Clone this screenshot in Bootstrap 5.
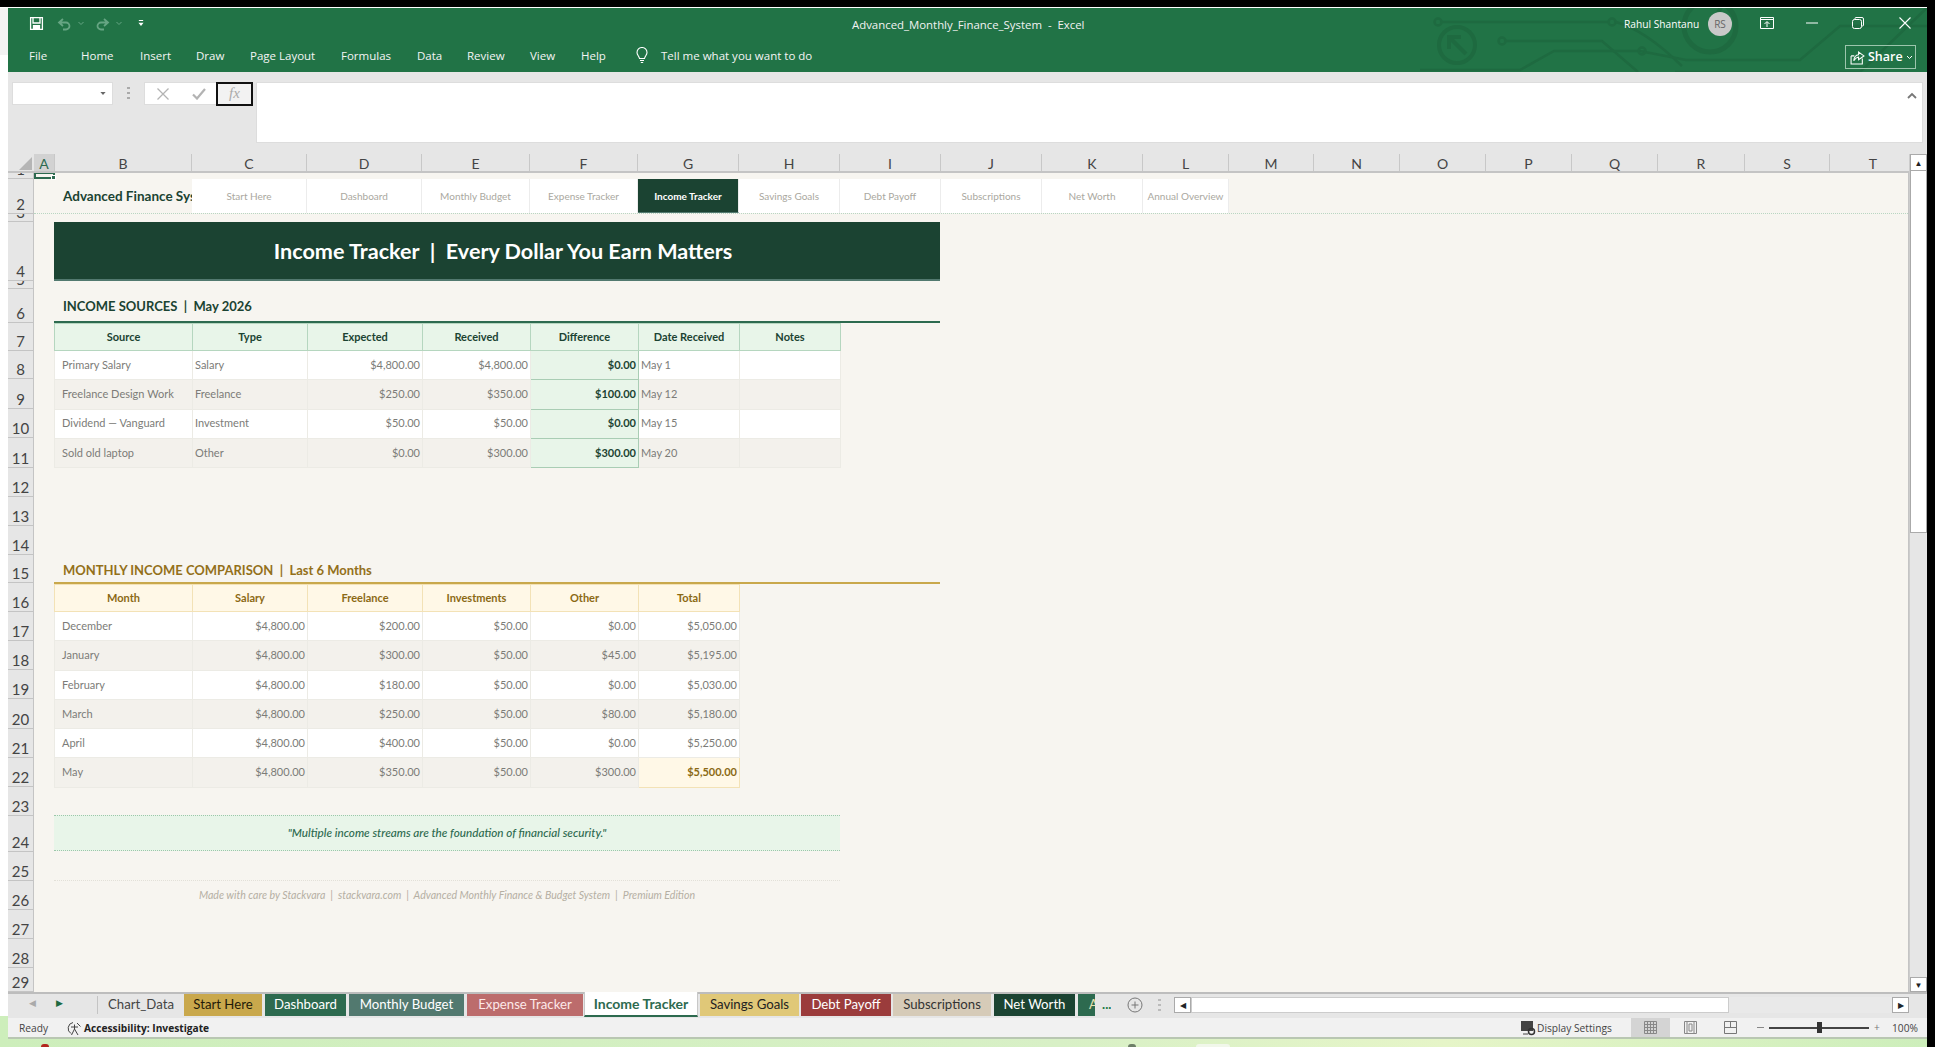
<!DOCTYPE html>
<html lang="en">
<head>
    <meta charset="UTF-8">
    <meta name="viewport" content="width=device-width, initial-scale=1.0">
    <title>Advanced_Monthly_Finance_System - Excel</title>
    <link href="https://cdn.jsdelivr.net/npm/bootstrap@5.3.0/dist/css/bootstrap.min.css" rel="stylesheet">
    <style>
        :root {
            --xl-green: #217346;
            --forest: #1b4332;
            --moss: #2d6a4f;
            --mint: #e8f5e9;
            --gold: #c9a84c;
            --gold-pale: #fff8e7;
            --paper: #f7f5f0;
            --chrome: #e6e6e6;
        }
        html, body { height: 100%; overflow: hidden; }
        body {
            background: #fff;
            font-family: "Open Sans", "Liberation Sans", sans-serif;
            font-size: 12px;
            position: relative;
        }
        .top-strip { height: 8px; background: #000; border-bottom: 1px solid #fff; }
        .right-strip { position: absolute; top: 0; right: 0; bottom: 0; width: 8px; background: #000; }
        .left-strip { position: absolute; top: 8px; left: 0; width: 8px; height: 47px; background: #f3f3f3; }
        .wallpaper { position: absolute; left: 0; right: 8px; top: 1016px; bottom: 0; background: linear-gradient(90deg, #cdeebb, #d8f0c6 55%, #e6f5c8 75%, #cdeebb); }
        .wall-spot { position: absolute; top: 1044px; height: 3px; border-radius: 3px 3px 0 0; }
        .xl-window { position: relative; z-index: 1; margin-left: 8px; width: 1919px; height: 1031px; }

        /* ribbon */
        .ribbon { height: 64px; background: var(--xl-green); color: #fff; position: relative; overflow: hidden; }
        .circuit { position: absolute; left: 1412px; top: 0; }
        .title-row { height: 32px; position: relative; }
        .qat { position: absolute; left: 21px; top: 8px; }
        .qat-undo { margin-left: 13px; }
        .qat-chev { margin-left: 6px; }
        .qat-redo { margin-left: 11px; }
        .qat-more { margin-left: 16px; }
        .doc-title { position: absolute; left: 844px; top: 8px; font-size: 11.4px; color: #f2f2f2; white-space: pre; }
        .user-name { position: absolute; left: 1616px; top: 9px; font-size: 10.2px; white-space: nowrap; }
        .avatar { position: absolute; left: 1700px; top: 4px; width: 24px; height: 24px; border-radius: 50%; background: #c9c9c9; color: #666; font-size: 10px; text-align: center; line-height: 24px; }
        .ctl-ico { position: absolute; top: 9px; }
        .menu-row { height: 32px; position: relative; }
        .menu-item { position: absolute; top: 7px; font-size: 11.5px; color: #f4f4f4; white-space: nowrap; }
        .share-btn { position: absolute; left: 1837px; top: 5px; width: 71px; height: 24px; border: 1px solid #9cc5ac; font-size: 12.5px; font-weight: 600; padding-left: 4px; gap: 3px; }

        /* formula bar */
        .formula-bar { height: 82px; background: var(--chrome); padding: 10px 4px 0 4px; }
        .name-box { width: 101px; height: 23px; background: #fff; border: 1px solid #ddd; padding-right: 6px; }
        .grip-dots { width: 31px; color: #aaa; }
        .fx-group { width: 109px; height: 23px; background: #fff; border: 1px solid #ddd; margin-right: 3px; }
        .fx-x { margin-left: 12px; margin-right: 23px; }
        .fx-btn { width: 37px; height: 24px; border: 2px solid #111; background: #f2f2f2; color: #aaa; font-family: "Liberation Serif", serif; font-style: italic; font-size: 15px; text-align: center; line-height: 19px; margin-left: auto; margin-right: -1px; }
        .formula-input { flex: 1; height: 61px; background: #fff; border: 1px solid #ddd; position: relative; }
        .formula-input svg { position: absolute; right: 5px; top: 9px; }

        /* grid shell */
        .grid-area { height: 838px; }
        .grid-left { width: 1901px; flex: none; overflow: hidden; background: #c4c4c4; }
        .col-strip { height: 19px; background: var(--chrome); font-family: "Lato", sans-serif; font-size: 14px; color: #444; border-bottom: 2px solid #c4c4c4; width: 1950px; }
        .col-corner { width: 26px; position: relative; flex: none; }
        .col-corner svg { position: absolute; right: 2px; bottom: 1px; }
        .col-label { text-align: center; border-right: 1px solid #c8c8c8; line-height: 19px; flex: none; }
        .col-label.on { background: #d2d2d2; color: var(--moss); }
        .sheet-wrap { height: 819px; }
        .row-strip { width: 26px; flex: none; background: var(--chrome); font-family: "Lato", sans-serif; font-size: 15px; color: #444; border-right: 1px solid #c4c4c4; }
        .row-label { border-bottom: 1px solid #c4c4c4; text-align: center; overflow: hidden; display: flex; align-items: flex-end; justify-content: center; line-height: 17px; }
        .sheet { width: 1874px; flex: none; background: var(--paper); font-family: "Lato", sans-serif; position: relative; overflow: hidden; }
        .cell-cursor { position: absolute; left: 0; top: 0; width: 21px; height: 6px; border: 2px solid var(--moss); border-top-width: 1px; }
        .cell-cursor::after { content: ""; position: absolute; right: -3px; bottom: -3px; width: 5px; height: 5px; background: var(--moss); border: 1px solid #fff; }

        .nav-row { margin-top: 6px; height: 35px; border-bottom: 1px dotted #b9d6c2; width: 1874px; }
        .nav-brand { width: 158px; flex: none; padding-left: 29px; font-weight: 700; font-size: 13.5px; color: var(--forest); line-height: 35px; white-space: nowrap; overflow: hidden; }
        .nav-cell { flex: none; background: #fff; border-right: 1px solid #ececec; color: #aaa8a0; font-size: 10px; text-align: center; line-height: 35px; white-space: nowrap; }
        .nav-cell.on { background: var(--forest); color: #fff; font-weight: 700; border-bottom: 1px solid #52796f; }
        .banner { margin: 8px 0 0 20px; width: 886px; height: 59px; padding-left: 12px; background: var(--forest); color: #fff; font-weight: 700; font-size: 21.6px; text-align: center; line-height: 58px; border-bottom: 2px solid #52796f; white-space: pre; }
        .sect-title { margin: 8px 0 0 20px; width: 886px; height: 34px; padding-left: 9px; font-weight: 700; font-size: 13px; line-height: 35px; white-space: pre; color: var(--forest); border-bottom: 2px solid var(--moss); }
        .sect-title.goldish { margin-top: 87px; height: 29px; line-height: 31px; color: #93701a; border-bottom-color: var(--gold); }

        .sheet-table { table-layout: fixed; margin: 0 0 0 20px; --bs-table-bg: transparent; font-size: 11px; color: #7c7c78; width: auto; }
        .sheet-table th, .sheet-table td { padding: 0 2px; vertical-align: middle; border: 1px solid #ecebe5; white-space: nowrap; }
        .sheet-table th { height: 27px; text-align: center; font-weight: 700; color: var(--forest); background: var(--mint); border-color: #b5d6bf; }
        .sheet-table td { height: 29.3px; background: #fff; }
        .sheet-table tr:nth-child(even) td { background: #f3f1ec; }
        .sheet-table td:first-child { padding-left: 7px; }
        .sheet-table td.gain { background: var(--mint) !important; color: var(--forest); font-weight: 700; border-color: #a9cdb4; }
        .sheet-table.goldish th { background: var(--gold-pale); color: #8b6914; border-color: #f3e2b6; }
        .sheet-table.goldish td { height: 29.25px; }
        .sheet-table.goldish td.top-total { background: var(--gold-pale) !important; color: #8b6914; font-weight: 700; border-color: #f3e2b6; }

        .quote-band { margin: 27px 0 0 20px; width: 786px; height: 36px; background: var(--mint); border-top: 1px dotted #9cc7aa; border-bottom: 1px dotted #9cc7aa; color: var(--moss); font-style: italic; font-size: 11.7px; font-weight: 500; text-align: center; line-height: 32px; }
        .made-with { margin: 29px 0 0 20px; width: 786px; height: 29px; border-top: 1px dotted #e2e0d8; color: #b5afa3; font-style: italic; font-size: 10.6px; text-align: center; line-height: 28px; white-space: pre; }

        .vscroll { width: 18px; flex: none; background: var(--chrome); position: relative; border-left: 1px solid #ccc; }
        .scroll-thumb { height: 362px; background: #fff; border: 1px solid #aaa; border-top: 0; }
        .scroll-btn { width: 17px; height: 17px; background: #fff; border: 1px solid #aaa; font-size: 8px; text-align: center; line-height: 15px; color: #222; }
        .vscroll-end { position: absolute; bottom: 0; left: 0; height: 15px; line-height: 13px; }

        /* sheet tabs */
        .tab-bar { height: 26px; background: var(--chrome); border-top: 2px solid #bdbdbd; position: relative; font-family: "Lato", sans-serif; font-size: 13.2px; }
        .tab-bar .sheet-tab { position: absolute; top: 0; height: 22px; line-height: 21px; text-align: center; white-space: nowrap; overflow: hidden; }
        .tab-bar .tab-active { top: -2px; height: 25px; background: #fff; color: var(--moss); font-weight: 700; font-size: 14px; line-height: 24px; border-bottom: 2px solid var(--moss); border-left: 1px solid #c8c8c8; border-right: 1px solid #c8c8c8; }
        .tab-bar .tab-cut { text-align: left; padding-left: 11px; }
        .tab-bar .tab-tool { position: absolute; }
        .tab-arrow { position: absolute; top: 2px; font-size: 9px; color: #aaa; }
        .h-track { position: absolute; left: 1166px; top: 3px; width: 735px; height: 16px; background: #e9e9e9; }
        .h-thumb { position: absolute; left: 17px; top: 0; width: 538px; height: 16px; background: #fff; border: 1px solid #ccc; }
        .h-btn { position: absolute; top: 0; width: 17px; height: 16px; background: #fff; border: 1px solid #aaa; font-size: 8px; text-align: center; line-height: 14px; }

        /* status bar */
        .status-bar { height: 21px; background: #f1f1f1; border-bottom: 2px solid #b9c7b2; position: relative; font-family: "Open Sans", sans-serif; font-size: 10.2px; color: #444; }
        .status-bar > * { position: absolute; }
        .status-txt { top: 3px; white-space: nowrap; }
        .view-on { left: 1623px; top: 0; width: 39px; height: 19px; background: #d4d4d4; }
    </style>
</head>
<body>
    <div class="top-strip"></div>
    <div class="right-strip"></div>
    <div class="left-strip"></div>
    <div class="wallpaper"></div>
    <div class="wall-spot" style="left:41px;width:8px;background:#b3261e"></div>
    <div class="wall-spot" style="left:1128px;width:8px;background:#6d7f68"></div>
    <div class="wall-spot" style="left:1196px;width:34px;background:#f1f7ea"></div>

    <div class="xl-window d-flex flex-column">
        <!-- barra de titulo + menu -->
        <header class="ribbon">
            <svg class="circuit" width="515" height="64" fill="none" stroke="#1e6a40" stroke-width="2.5">
                <circle cx="18" cy="14" r="3.5"/><path d="M22 14H188"/><circle cx="192" cy="14" r="3.5"/>
                <path d="M196 14 Q225 22 262 58"/>
                <circle cx="37" cy="37" r="18" stroke-width="4"/><path d="M46 46L31 31M29 41V29H41" stroke-width="4"/>
                <circle cx="82" cy="33" r="3.5"/><path d="M86 33H182L218 64"/>
                <path d="M0 62H100L134 43H220L266 52H380L420 18H515"/><circle cx="222" cy="43" r="3.5"/>
                <path d="M255 64H440L515 -8"/>
                <circle cx="290" cy="18" r="26" stroke-width="5"/><path d="M279 -3H302L290 20" stroke-width="4"/>
            </svg>
            <div class="title-row">
                <div class="qat d-flex align-items-center">
                    <svg width="15" height="15" viewBox="0 0 15 15" fill="none" stroke="#fff" stroke-width="1.3"><path d="M1.6 1.6H13.4V13.4H1.6Z"/><path d="M4 1.6V7H11V1.6"/><path d="M4.5 13.4V9.6H10.5V13.4" fill="#fff"/></svg>
                    <svg class="qat-undo" width="15" height="14" viewBox="0 0 15 14" fill="none" stroke="#66a583" stroke-width="1.8"><path d="M6 2L2 5.5 6 9M2.5 5.5H9a3.5 3.5 0 0 1 0 7H6"/></svg>
                    <svg class="qat-chev" width="6" height="5" viewBox="0 0 6 5" fill="none" stroke="#66a583"><path d="M.5 1L3 3.5 5.5 1"/></svg>
                    <svg class="qat-redo" width="15" height="14" viewBox="0 0 15 14" fill="none" stroke="#66a583" stroke-width="1.8"><path d="M9 2l4 3.5L9 9M12.500 5.500H6a3.500 3.500 0 0 0 0 7h3"/></svg>
                    <svg class="qat-chev" width="6" height="5" viewBox="0 0 6 5" fill="none" stroke="#66a583"><path d="M.5 1L3 3.5 5.5 1"/></svg>
                    <svg class="qat-more" width="6" height="7" viewBox="0 0 7 8" fill="#fff"><path d="M1 0H6V1H1ZM0.500 3H6.500L3.500 7Z"/></svg>
                </div>
                <div class="doc-title">Advanced_Monthly_Finance_System  -  Excel</div>
                <div class="user-name">Rahul Shantanu</div>
                <div class="avatar">RS</div>
                <svg class="ctl-ico" style="left:1752px" width="14" height="12" viewBox="0 0 14 12" fill="none" stroke="#fff"><path d="M.5 .5H13.500V11.500H.5ZM.5 2.500H13.500M7 10V5M4.500 7L7 4.500 9.500 7" stroke-width="1"/></svg>
                <svg class="ctl-ico" style="left:1798px" width="12" height="12" viewBox="0 0 12 12" stroke="#fff"><path d="M0 6H12"/></svg>
                <svg class="ctl-ico" style="left:1844px" width="12" height="12" viewBox="0 0 12 12" fill="none" stroke="#fff"><path d="M3 2.500V1.500Q3 .5 4 .5H10Q11.500 .5 11.500 2V8Q11.500 9 10.500 9H9.500"/><rect x=".5" y="2.500" width="9" height="9" rx="2"/></svg>
                <svg class="ctl-ico" style="left:1891px" width="12" height="12" viewBox="0 0 12 12" stroke="#fff" stroke-width="1.1"><path d="M.5 .5L11.500 11.500M11.500 .5L.5 11.500"/></svg>
            </div>
            <nav class="menu-row">
                <span class="menu-item" style="left:21px">File</span>
                <span class="menu-item" style="left:73px">Home</span>
                <span class="menu-item" style="left:132px">Insert</span>
                <span class="menu-item" style="left:188px">Draw</span>
                <span class="menu-item" style="left:242px">Page Layout</span>
                <span class="menu-item" style="left:333px">Formulas</span>
                <span class="menu-item" style="left:409px">Data</span>
                <span class="menu-item" style="left:459px">Review</span>
                <span class="menu-item" style="left:522px">View</span>
                <span class="menu-item" style="left:573px">Help</span>
                <svg class="menu-item" style="left:628px;top:7px" width="12" height="17" viewBox="0 0 12 17" fill="none" stroke="#fff" stroke-width="1.100"><path d="M3.500 11.500C3 9 1 8 1 5.500a5 5 0 0 1 10 0C11 8 9 9 8.500 11.500ZM4 13.500H8M4.800 15.500H7.200"/></svg>
                <span class="menu-item" style="left:653px">Tell me what you want to do</span>
                <div class="share-btn d-flex align-items-center">
                    <svg width="15" height="15" viewBox="0 0 14 14" fill="none" stroke="#fff"><path d="M1 5.500V13H11.500V8M1 5.500H4M3.500 10Q4 5 8 4.500V2L13 5.500 8 9V6.500Q5.500 6.800 3.500 10Z"/></svg>
                    <span>Share</span>
                    <svg width="7" height="5" viewBox="0 0 7 5" fill="none" stroke="#fff"><path d="M1 1L3.500 3.500 6 1"/></svg>
                </div>
            </nav>
        </header>

        <!-- barra de formulas -->
        <div class="formula-bar d-flex align-items-start">
            <div class="name-box d-flex align-items-center justify-content-end">
                <svg width="6" height="3" viewBox="0 0 7 4" fill="#666"><path d="M0 0H7L3.500 4Z"/></svg>
            </div>
            <div class="grip-dots d-flex justify-content-center pt-1">
                <svg width="3" height="14" viewBox="0 0 3 14" fill="#aaa"><rect y="1" width="3" height="2"/><rect y="6" width="3" height="2"/><rect y="11" width="3" height="2"/></svg>
            </div>
            <div class="fx-group d-flex align-items-center">
                <svg class="fx-x" width="12" height="12" viewBox="0 0 12 12" stroke="#b3b3b3" stroke-width="1.300"><path d="M.5 .5L11.500 11.500M11.500 .5L.5 11.500"/></svg>
                <svg width="14" height="12" viewBox="0 0 14 12" fill="none" stroke="#b3b3b3" stroke-width="2.200"><path d="M1 6.500L5 10.500 13 1"/></svg>
                <div class="fx-btn">fx</div>
            </div>
            <div class="formula-input">
                <svg width="10" height="7" viewBox="0 0 10 7" fill="none" stroke="#777" stroke-width="1.800"><path d="M1 6L5 2 9 6"/></svg>
            </div>
        </div>

        <div class="grid-area d-flex">
            <div class="grid-left">
                <!-- encabezado de columnas -->
                <div class="col-strip d-flex" id="colStrip">
                    <div class="col-corner">
                        <svg width="13" height="13" viewBox="0 0 13 13" fill="#b5b5b5"><path d="M13 0V13H0Z"/></svg>
                    </div>
                </div>

                <div class="sheet-wrap d-flex">
                    <div class="row-strip" id="rowStrip"></div>
                    <main class="sheet">
                        <div class="cell-cursor"></div>
                        <div class="nav-row d-flex" id="navRow">
                            <div class="nav-brand">Advanced Finance System</div>
                        </div>
                        <div class="banner">Income Tracker  |  Every Dollar You Earn Matters</div>

                        <div class="sect-title">INCOME SOURCES  |  May 2026</div>
                        <table class="table sheet-table" id="tablaIngresos">
                            <colgroup>
                                <col style="width:138px"><col style="width:115px"><col style="width:115px"><col style="width:108px"><col style="width:108px"><col style="width:101px"><col style="width:101px">
                            </colgroup>
                            <thead><tr><th>Source</th><th>Type</th><th>Expected</th><th>Received</th><th>Difference</th><th>Date Received</th><th>Notes</th></tr></thead>
                            <tbody></tbody>
                        </table>

                        <div class="sect-title goldish">MONTHLY INCOME COMPARISON  |  Last 6 Months</div>
                        <table class="table sheet-table goldish" id="tablaMeses">
                            <colgroup>
                                <col style="width:138px"><col style="width:115px"><col style="width:115px"><col style="width:108px"><col style="width:108px"><col style="width:101px">
                            </colgroup>
                            <thead><tr><th>Month</th><th>Salary</th><th>Freelance</th><th>Investments</th><th>Other</th><th>Total</th></tr></thead>
                            <tbody></tbody>
                        </table>

                        <div class="quote-band">"Multiple income streams are the foundation of financial security."</div>
                        <div class="made-with">Made with care by Stackvara  |  stackvara.com  |  Advanced Monthly Finance &amp; Budget System  |  Premium Edition</div>
                    </main>
                </div>
            </div>
            <div class="vscroll">
                <div class="scroll-btn">&#9650;</div>
                <div class="scroll-thumb"></div>
                <div class="scroll-btn vscroll-end">&#9660;</div>
            </div>
        </div>

        <!-- pestañas -->
        <div class="tab-bar" id="tabBar">
            <span class="tab-arrow" style="left:21px">&#9664;</span>
            <span class="tab-arrow" style="left:48px;color:#1e6a40">&#9654;</span>
            <span class="tab-tool" style="left:89px;top:2px;height:18px;width:1px;background:#c4c4c4"></span>
            <span class="sheet-tab" style="left:1094px;color:#1e7a46;font-weight:700">...</span>
            <svg class="tab-tool" style="left:1119px;top:3px" width="16" height="16" viewBox="0 0 16 16" fill="none" stroke="#777"><circle cx="8" cy="8" r="7"/><path d="M8 4.500V11.500M4.500 8H11.500"/></svg>
            <svg class="tab-tool" style="left:1150px;top:4px" width="3" height="14" viewBox="0 0 3 14" fill="#bbb"><rect y="1" width="3" height="2"/><rect y="6" width="3" height="2"/><rect y="11" width="3" height="2"/></svg>
            <div class="h-track">
                <div class="h-thumb"></div>
                <div class="h-btn" style="left:0">&#9664;</div>
                <div class="h-btn" style="right:0">&#9654;</div>
            </div>
        </div>

        <!-- barra de estado -->
        <footer class="status-bar">
            <span class="status-txt" style="left:11px">Ready</span>
            <svg style="left:59px;top:3px" width="15" height="15" viewBox="0 0 15 15" fill="none" stroke="#444"><path d="M6 1.500A6 6 0 0 0 4 12.500M7.500 3.500V8M4 6H11M7.500 8L4.500 14M7.500 8L11 14M10 2L13.500 5.500"/></svg>
            <span class="status-txt fw-bold" style="left:76px;color:#222">Accessibility: Investigate</span>
            <svg style="left:1512px;top:2px" width="16" height="16" viewBox="0 0 16 16"><rect x="1" y="1" width="12" height="10" fill="#444"/><path d="M3 14H8" stroke="#444"/><circle cx="11.500" cy="11.500" r="3" fill="none" stroke="#333" stroke-width="1.500"/></svg>
            <span class="status-txt" style="left:1529px">Display Settings</span>
            <div class="view-on"></div>
            <svg style="left:1636px;top:3px" width="13" height="13" viewBox="0 0 13 13" fill="none" stroke="#888"><path d="M.5 .5H12.500V12.500H.5ZM.5 3.500H12.500M.5 6.500H12.500M.5 9.500H12.500M3.500 .5V12.500M6.500 .5V12.500M9.500 .5V12.500"/></svg>
            <svg style="left:1676px;top:3px" width="13" height="13" viewBox="0 0 13 13" fill="none" stroke="#888"><path d="M.5 .5H12.500V12.500H.5ZM3 .5V12.500M10 .5V12.500M5 3H8V10H5Z"/></svg>
            <svg style="left:1716px;top:3px" width="13" height="13" viewBox="0 0 13 13" fill="none" stroke="#777"><path d="M.5 .5H12.500V12.500H.5ZM.5 6.500H12.500M6.500 .5V6.500"/></svg>
            <span style="left:1749px;top:9px;width:7px;height:1px;background:#888"></span>
            <span style="left:1761px;top:9px;width:100px;height:2px;background:#444"></span>
            <span style="left:1809px;top:4px;width:5px;height:11px;background:#333"></span>
            <span class="status-txt" style="left:1866px;top:2px;color:#777">+</span>
            <span class="status-txt" style="left:1884px">100%</span>
        </footer>
    </div>

    <script>
        // Columnas A..T con el ancho de la hoja
        const columnas = [["A",21],["B",137],["C",115],["D",115],["E",108],["F",108],["G",101],["H",101],["I",101],["J",101],["K",101],["L",86],
            ["M",85],["N",86],["O",86],["P",86],["Q",86],["R",87],["S",85],["T",87]];
        const colStrip = document.getElementById("colStrip");
        columnas.forEach(([letra, ancho], i) => {
            const c = document.createElement("div");
            c.className = "col-label" + (i === 0 ? " on" : "");
            c.style.width = ancho + "px";
            c.textContent = letra;
            colStrip.appendChild(c);
        });

        // Alturas de fila
        const alturas = [6,35,8,59,8,34,28,28,30,29,30,29,29,29,28,29,29,29,29,30,29,29,29,36,29,29,29,29,24];
        const rowStrip = document.getElementById("rowStrip");
        alturas.forEach((h, i) => {
            const r = document.createElement("div");
            r.className = "row-label";
            r.style.height = h + "px";
            r.textContent = i + 1;
            rowStrip.appendChild(r);
        });

        // Menu de la hoja
        const menu = [["Start Here",115],["Dashboard",115],["Monthly Budget",108],["Expense Tracker",108],["Income Tracker",101],["Savings Goals",101],
            ["Debt Payoff",101],["Subscriptions",101],["Net Worth",101],["Annual Overview",86]];
        const navRow = document.getElementById("navRow");
        menu.forEach(([nombre, ancho]) => {
            const n = document.createElement("div");
            n.className = "nav-cell" + (nombre === "Income Tracker" ? " on" : "");
            n.style.width = ancho + "px";
            n.textContent = nombre;
            navRow.appendChild(n);
        });

        const ingresos = [
            ["Primary Salary","Salary","$4,800.00","$4,800.00","$0.00","May 1"],
            ["Freelance Design Work","Freelance","$250.00","$350.00","$100.00","May 12"],
            ["Dividend — Vanguard","Investment","$50.00","$50.00","$0.00","May 15"],
            ["Sold old laptop","Other","$0.00","$300.00","$300.00","May 20"]
        ];
        document.querySelector("#tablaIngresos tbody").innerHTML = ingresos.map(f => `
            <tr><td>${f[0]}</td><td>${f[1]}</td><td class="text-end">${f[2]}</td><td class="text-end">${f[3]}</td>
            <td class="text-end gain">${f[4]}</td><td>${f[5]}</td><td></td></tr>`).join("");

        const meses = [
            ["December","$4,800.00","$200.00","$50.00","$0.00","$5,050.00"],
            ["January","$4,800.00","$300.00","$50.00","$45.00","$5,195.00"],
            ["February","$4,800.00","$180.00","$50.00","$0.00","$5,030.00"],
            ["March","$4,800.00","$250.00","$50.00","$80.00","$5,180.00"],
            ["April","$4,800.00","$400.00","$50.00","$0.00","$5,250.00"],
            ["May","$4,800.00","$350.00","$50.00","$300.00","$5,500.00"]
        ];
        document.querySelector("#tablaMeses tbody").innerHTML = meses.map((f, i) => `
            <tr><td>${f[0]}</td>${f.slice(1, 5).map(v => `<td class="text-end">${v}</td>`).join("")}
            <td class="text-end${i === 5 ? " top-total" : ""}">${f[5]}</td></tr>`).join("");

        // Pestañas de hojas
        const hojas = [
            ["Chart_Data",92,82,"transparent","#444"],["Start Here",176,78,"#c9a84c","#1f1a08"],["Dashboard",257,81,"#2d6a4f","#fff"],
            ["Monthly Budget",341,115,"#52796f","#fff"],["Expense Tracker",459,116,"#bc6c6c","#fde8e8"],["Income Tracker",576,114,"","" ],
            ["Savings Goals",692,99,"#e0c878","#222"],["Debt Payoff",793,90,"#9b3c3c","#fff"],["Subscriptions",885,98,"#d6cbb8","#333"],
            ["Net Worth",986,81,"#1b4332","#fff"],["A",1070,17,"#2d6a4f","#e8e2b0"]
        ];
        const tabBar = document.getElementById("tabBar");
        hojas.forEach(([nombre, x, w, fondo, color]) => {
            const t = document.createElement("span");
            t.className = "sheet-tab" + (nombre === "Income Tracker" ? " tab-active" : "") + (nombre === "A" ? " tab-cut" : "");
            t.style.left = x + "px";
            t.style.width = w + "px";
            if (fondo) { t.style.background = fondo; t.style.color = color; }
            t.textContent = nombre;
            tabBar.appendChild(t);
        });
    </script>
    <script src="https://cdn.jsdelivr.net/npm/bootstrap@5.3.0/dist/js/bootstrap.bundle.min.js"></script>
</body>
</html>
